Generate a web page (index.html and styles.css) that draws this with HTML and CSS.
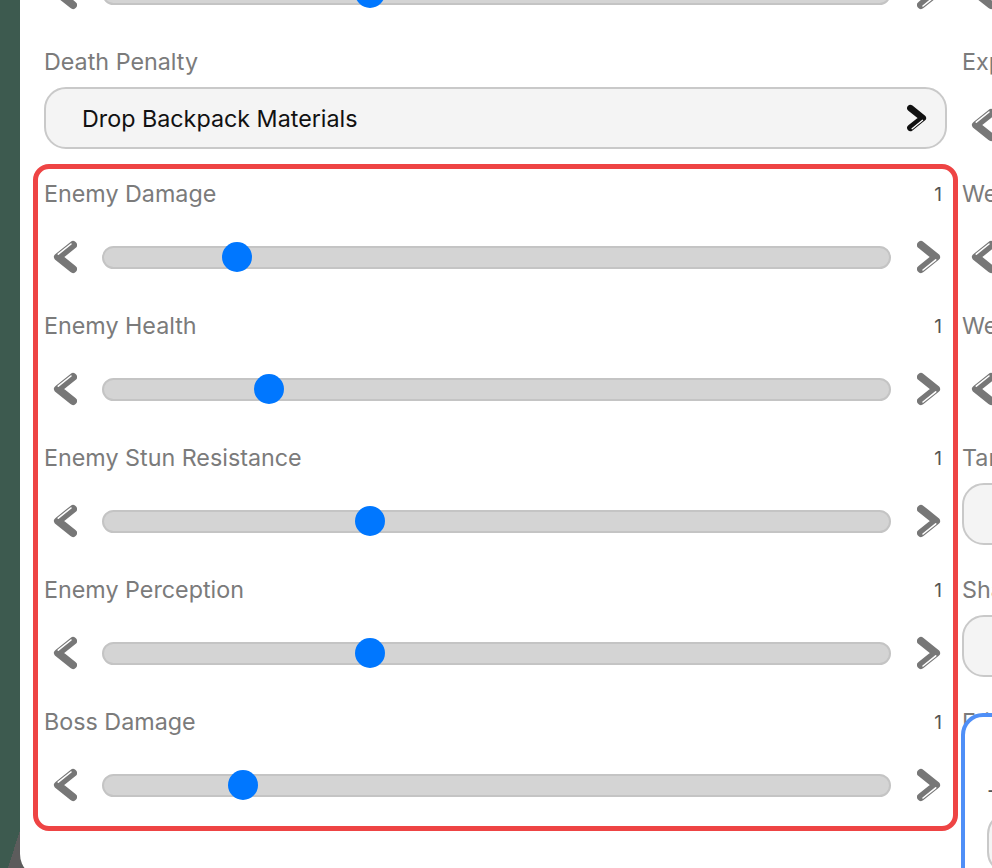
FILE: index.html
```html
<!DOCTYPE html>
<html lang="en">
<head>
<meta charset="utf-8">
<title>Difficulty Settings</title>
<link rel="stylesheet" href="styles.css">
</head>
<body>
<svg width="0" height="0" class="defs" aria-hidden="true">
  <defs>
    <g id="chev-left">
      <polyline points="20,5 5,17 20,29" fill="none" stroke="currentColor" stroke-width="8" stroke-linecap="round" stroke-linejoin="round"/>
      <line x1="18" y1="4" x2="5.3" y2="14.2" stroke="#ffffff" stroke-width="1.6" stroke-linecap="round"/>
    </g>
  </defs>
</svg>
<div class="app">
  <div class="panel">
    <div class="columns">
      <div class="col">
        <div class="field">
          <div class="field-head"></div>
          <div class="control">
            <div class="slider">
              <svg class="chev" viewBox="0 0 24 34"><use href="#chev-left"/></svg>
              <div class="track"><div class="thumb" style="left:33.9%"></div></div>
              <svg class="chev" viewBox="0 0 24 34"><use href="#chev-left" transform="rotate(180 12 17)"/></svg>
            </div>
          </div>
        </div>

        <div class="field">
          <div class="field-head"><span class="label">Death Penalty</span></div>
          <div class="control">
            <div class="select">
              <span>Drop Backpack Materials</span>
              <svg class="chev-sm" viewBox="0 0 24 34"><use href="#chev-left" transform="rotate(180 12 17)"/></svg>
            </div>
          </div>
        </div>

        <div class="group group-red">
          <div class="field">
            <div class="field-head"><span class="label">Enemy Damage</span><span class="value">1</span></div>
            <div class="control">
              <div class="slider">
                <svg class="chev" viewBox="0 0 24 34"><use href="#chev-left"/></svg>
                <div class="track"><div class="thumb" style="left:16.9%"></div></div>
                <svg class="chev" viewBox="0 0 24 34"><use href="#chev-left" transform="rotate(180 12 17)"/></svg>
              </div>
            </div>
          </div>
          <div class="field">
            <div class="field-head"><span class="label">Enemy Health</span><span class="value">1</span></div>
            <div class="control">
              <div class="slider">
                <svg class="chev" viewBox="0 0 24 34"><use href="#chev-left"/></svg>
                <div class="track"><div class="thumb" style="left:21%"></div></div>
                <svg class="chev" viewBox="0 0 24 34"><use href="#chev-left" transform="rotate(180 12 17)"/></svg>
              </div>
            </div>
          </div>
          <div class="field">
            <div class="field-head"><span class="label">Enemy Stun Resistance</span><span class="value">1</span></div>
            <div class="control">
              <div class="slider">
                <svg class="chev" viewBox="0 0 24 34"><use href="#chev-left"/></svg>
                <div class="track"><div class="thumb" style="left:33.9%"></div></div>
                <svg class="chev" viewBox="0 0 24 34"><use href="#chev-left" transform="rotate(180 12 17)"/></svg>
              </div>
            </div>
          </div>
          <div class="field">
            <div class="field-head"><span class="label">Enemy Perception</span><span class="value">1</span></div>
            <div class="control">
              <div class="slider">
                <svg class="chev" viewBox="0 0 24 34"><use href="#chev-left"/></svg>
                <div class="track"><div class="thumb" style="left:33.9%"></div></div>
                <svg class="chev" viewBox="0 0 24 34"><use href="#chev-left" transform="rotate(180 12 17)"/></svg>
              </div>
            </div>
          </div>
          <div class="field">
            <div class="field-head"><span class="label">Boss Damage</span><span class="value">1</span></div>
            <div class="control">
              <div class="slider">
                <svg class="chev" viewBox="0 0 24 34"><use href="#chev-left"/></svg>
                <div class="track"><div class="thumb" style="left:17.7%"></div></div>
                <svg class="chev" viewBox="0 0 24 34"><use href="#chev-left" transform="rotate(180 12 17)"/></svg>
              </div>
            </div>
          </div>
        </div>
      </div>

      <div class="col">
        <div class="field">
          <div class="field-head"></div>
          <div class="control">
            <div class="slider">
              <svg class="chev" viewBox="0 0 24 34"><use href="#chev-left"/></svg>
              <div class="track"><div class="thumb" style="left:33.9%"></div></div>
              <svg class="chev" viewBox="0 0 24 34"><use href="#chev-left" transform="rotate(180 12 17)"/></svg>
            </div>
          </div>
        </div>
        <div class="field">
          <div class="field-head"><span class="label">Experience Rate</span><span class="value">1</span></div>
          <div class="control">
            <div class="slider">
              <svg class="chev" viewBox="0 0 24 34"><use href="#chev-left"/></svg>
              <div class="track"><div class="thumb" style="left:33.9%"></div></div>
              <svg class="chev" viewBox="0 0 24 34"><use href="#chev-left" transform="rotate(180 12 17)"/></svg>
            </div>
          </div>
        </div>
        <div class="field">
          <div class="field-head"><span class="label">Weapon Durability</span><span class="value">1</span></div>
          <div class="control">
            <div class="slider">
              <svg class="chev" viewBox="0 0 24 34"><use href="#chev-left"/></svg>
              <div class="track"><div class="thumb" style="left:33.9%"></div></div>
              <svg class="chev" viewBox="0 0 24 34"><use href="#chev-left" transform="rotate(180 12 17)"/></svg>
            </div>
          </div>
        </div>
        <div class="field">
          <div class="field-head"><span class="label">Weight Limit</span><span class="value">1</span></div>
          <div class="control">
            <div class="slider">
              <svg class="chev" viewBox="0 0 24 34"><use href="#chev-left"/></svg>
              <div class="track"><div class="thumb" style="left:33.9%"></div></div>
              <svg class="chev" viewBox="0 0 24 34"><use href="#chev-left" transform="rotate(180 12 17)"/></svg>
            </div>
          </div>
        </div>
        <div class="field">
          <div class="field-head"><span class="label">Target Lock</span></div>
          <div class="control">
            <div class="select">
              <span>Enabled</span>
              <svg class="chev-sm" viewBox="0 0 24 34"><use href="#chev-left" transform="rotate(180 12 17)"/></svg>
            </div>
          </div>
        </div>
        <div class="field">
          <div class="field-head"><span class="label">Shared Loot</span></div>
          <div class="control">
            <div class="select">
              <span>Enabled</span>
              <svg class="chev-sm" viewBox="0 0 24 34"><use href="#chev-left" transform="rotate(180 12 17)"/></svg>
            </div>
          </div>
        </div>
        <div class="field">
          <div class="field-head"><span class="label">Friendly Fire</span></div>
          <div class="group-blue">
            <div class="dash">-</div>
            <div class="select select-inner"><span>Off</span></div>
          </div>
        </div>
      </div>
    </div>
  </div>
</div>
</body>
</html>
```

FILE: styles.css
```css
html, body {
  margin: 0;
  height: 868px;
  overflow: hidden;
}

body {
  font-family: "Inter", "Liberation Sans", sans-serif;
  background:
    linear-gradient(#5c5c5c, #5c5c5c) 20px 830px / 30px 60px no-repeat,
    linear-gradient(to bottom right, transparent 50%, #5c5c5c 50%) 8px 830px / 12px 38px no-repeat,
    #3d5a4f;
}

.defs {
  position: absolute;
}

.app {
  padding-left: 20px;
  height: 878px;
  display: flex;
}

.panel {
  flex: 1;
  background: #ffffff;
  border-bottom-left-radius: 24px;
  overflow: hidden;
  padding-left: 24px;
}

.columns {
  display: flex;
  gap: 15px;
  margin-top: -84px;
}

.col {
  width: 903px;
  flex-shrink: 0;
  display: flex;
  flex-direction: column;
  gap: 31px;
}

.field {
  display: flex;
  flex-direction: column;
}

.field-head {
  height: 28px;
  display: flex;
  align-items: center;
  justify-content: space-between;
  padding-right: 5px;
}

.label {
  font-size: 23.3px;
  line-height: 28px;
  color: #7b7b7b;
  white-space: nowrap;
}

.value {
  font-size: 19px;
  color: #555555;
}

.control {
  height: 62px;
  margin-top: 11px;
}

.slider {
  height: 48px;
  margin-top: 14px;
  display: flex;
  align-items: center;
  padding: 0 6px 0 9px;
}

.chev {
  width: 24px;
  height: 34px;
  flex-shrink: 0;
  color: #777777;
}

.track {
  flex: 1;
  position: relative;
  height: 23px;
  box-sizing: border-box;
  margin: 0 26px 0 25px;
  background: #d4d4d4;
  border: 2px solid #c4c4c4;
  border-radius: 12px;
}

.thumb {
  position: absolute;
  top: 50%;
  width: 30px;
  height: 30px;
  border-radius: 50%;
  background: #0077ff;
  transform: translate(-50%, -50%);
}

.select {
  height: 62px;
  box-sizing: border-box;
  display: flex;
  align-items: center;
  justify-content: space-between;
  padding: 0 18px 0 36px;
  background: #f4f4f4;
  border: 2px solid #c9c9c9;
  border-radius: 22px;
  font-size: 23.3px;
  color: #111111;
}

.chev-sm {
  width: 20px;
  height: 28px;
  color: #111111;
}

.group-red {
  margin: -16px -11px -22px;
  padding: 11px 6px 17px;
  border: 5px solid #ee4444;
  border-radius: 16px;
  display: flex;
  flex-direction: column;
  gap: 31px;
}

.group-blue {
  position: relative;
  margin: -23px 0 0 -1px;
  height: 220px;
  padding: 59px 0 0 22px;
  background: #ffffff;
  border: 4px solid #4f8ff7;
  border-radius: 22px;
}

.dash {
  height: 28px;
  line-height: 28px;
  font-size: 22px;
  color: #555555;
}

.select-inner {
  margin-top: 8px;
  width: 300px;
}
```
